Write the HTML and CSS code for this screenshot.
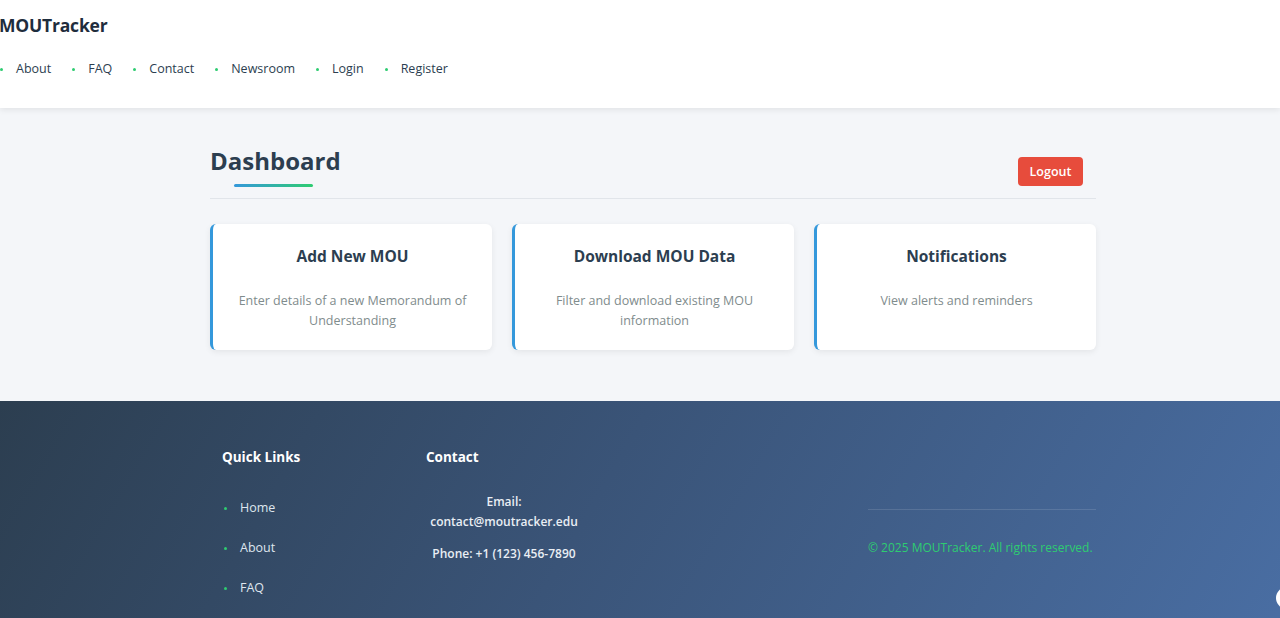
FILE: index.html
```html
<!DOCTYPE html>
<html lang="en">
<head>
<meta charset="utf-8">
<title>MOUTracker - Dashboard</title>
<link rel="stylesheet" href="styles.css">
</head>
<body>
<header class="site-header">
  <div class="logo">MOUTracker</div>
  <nav>
    <ul class="nav-list">
      <li><a href="#">About</a></li>
      <li><a href="#">FAQ</a></li>
      <li><a href="#">Contact</a></li>
      <li><a href="#">Newsroom</a></li>
      <li><a href="#">Login</a></li>
      <li><a href="#">Register</a></li>
    </ul>
  </nav>
</header>
<main class="main">
  <div class="container">
    <div class="dash-head">
      <h1 class="dash-title">Dashboard</h1>
      <button class="logout">Logout</button>
    </div>
    <div class="cards">
      <div class="card">
        <h3>Add New MOU</h3>
        <p>Enter details of a new Memorandum of Understanding</p>
      </div>
      <div class="card">
        <h3>Download MOU Data</h3>
        <p>Filter and download existing MOU information</p>
      </div>
      <div class="card">
        <h3>Notifications</h3>
        <p>View alerts and reminders</p>
      </div>
    </div>
  </div>
</main>
<footer class="footer">
  <div class="footer-inner">
    <div class="fcol fcol-links">
      <h4>Quick Links</h4>
      <ul class="flinks">
        <li><a href="#">Home</a></li>
        <li><a href="#">About</a></li>
        <li><a href="#">FAQ</a></li>
      </ul>
    </div>
    <div class="fcol fcol-contact">
      <h4>Contact</h4>
      <p class="contact-line">Email: contact@moutracker.edu</p>
      <p class="contact-line">Phone: +1 (123) 456-7890</p>
    </div>
    <div class="fcol fcol-spacer"></div>
    <div class="fcol fcol-copy">
      <div class="fline"></div>
      <p class="copy">© 2025 MOUTracker. All rights reserved.</p>
    </div>
  </div>
  <div class="float-btn"></div>
</footer>
</body>
</html>
```
FILE: styles.css
```css
* { box-sizing: border-box; }
html, body { margin: 0; padding: 0; }
body {
  font-family: "Open Sans", "Noto Sans", sans-serif;
  color: #2c3e50;
  background: #f4f6f9;
  overflow: hidden;
  height: 618px;
}
a { text-decoration: none; color: inherit; }

.site-header {
  background: #fff;
  height: 108px;
  padding-top: 12px;
  box-shadow: 0 2px 6px rgba(0,0,0,0.08);
  position: relative;
  z-index: 1;
}
.logo {
  font-size: 17.5px;
  font-weight: 700;
  color: #1f2d3d;
  line-height: 26px;
  letter-spacing: -0.2px;
  margin-left: -1px;
}
.nav-list {
  list-style: none;
  margin: 22px 0 0 0;
  padding: 0;
  display: flex;
}
.nav-list li {
  display: flex;
  align-items: center;
  font-size: 12.5px;
  font-weight: 500;
  color: #2c3e50;
  line-height: 18px;
  margin-right: 21px;
}
.nav-list li::before {
  content: "";
  width: 3px;
  height: 3px;
  background: #2ecc71;
  border-radius: 50%;
  margin-right: 13px;
}

.main {
  padding: 36px 0 51px;
}
.container {
  width: 886px;
  margin-left: 210px;
}
.dash-head {
  display: flex;
  justify-content: space-between;
  align-items: flex-end;
  border-bottom: 1px solid #e1e5ea;
  padding-bottom: 11px;
}
.dash-title {
  margin: 0;
  font-size: 24px;
  font-weight: 700;
  line-height: 34px;
  color: #2c3e50;
}
.dash-title::after {
  content: "";
  display: block;
  width: 79px;
  height: 3px;
  margin: 6px 0 0 24px;
  border-radius: 2px;
  background: linear-gradient(90deg, #3498db, #2ecc71);
}
.logout {
  background: #e74c3c;
  color: #fff;
  border: none;
  border-radius: 4px;
  font-family: inherit;
  font-size: 12.5px;
  font-weight: 600;
  width: 65px;
  height: 29px;
  margin-right: 13px;
  position: relative;
  top: -1px;
}

.cards {
  display: grid;
  grid-template-columns: repeat(3, 1fr);
  gap: 20px;
  margin-top: 25px;
}
.card {
  background: #fff;
  border-left: 3px solid #3498db;
  border-radius: 6px;
  box-shadow: 0 2px 6px rgba(0,0,0,0.07);
  padding: 21px 20px 19px;
  text-align: center;
  height: 126px;
}
.card h3 {
  margin: 0;
  font-size: 15.5px;
  font-weight: 700;
  line-height: 22px;
  color: #2c3e50;
}
.card p {
  margin: 24px 0 0;
  font-size: 12.5px;
  line-height: 20px;
  color: #7f8c8d;
}

.footer {
  position: relative;
  background: linear-gradient(120deg, #2c3e50 0%, #3a5478 45%, #4a6fa5 100%);
  height: 300px;
  padding-top: 46px;
  color: #fff;
}
.footer-inner {
  width: 886px;
  margin-left: 210px;
  display: flex;
}
.fcol h4 {
  margin: 0;
  font-size: 13.5px;
  font-weight: 700;
  line-height: 20px;
  color: #fff;
}
.fcol-links {
  width: 216px;
  padding-left: 12px;
}
.flinks {
  list-style: none;
  margin: 31px 0 0;
  padding: 0;
}
.flinks li {
  display: flex;
  align-items: center;
  font-size: 12.5px;
  line-height: 20px;
  color: #dfe6ee;
  margin-bottom: 20px;
}
.flinks li::before {
  content: "";
  width: 3px;
  height: 3px;
  border-radius: 50%;
  background: #2ecc71;
  margin: 0 13px 0 2px;
}
.fcol-contact {
  width: 156px;
}
.contact-line {
  text-align: center;
  font-size: 12px;
  font-weight: 600;
  line-height: 20px;
  color: #e9eef4;
  margin: 0;
}
.fcol-contact h4 { margin-bottom: 25px; }
.contact-line + .contact-line { margin-top: 12px; }
.fcol-spacer { flex: 1; }
.fcol-copy {
  width: 228px;
  padding-top: 62px;
}
.fline {
  height: 1px;
  background: rgba(255,255,255,0.12);
}
.copy {
  margin: 28px 0 0;
  font-size: 12px;
  line-height: 20px;
  color: #2ecc71;
  white-space: nowrap;
}
.float-btn {
  position: absolute;
  right: -18px;
  top: 186px;
  width: 22px;
  height: 22px;
  border-radius: 50%;
  background: #fff;
}
```
